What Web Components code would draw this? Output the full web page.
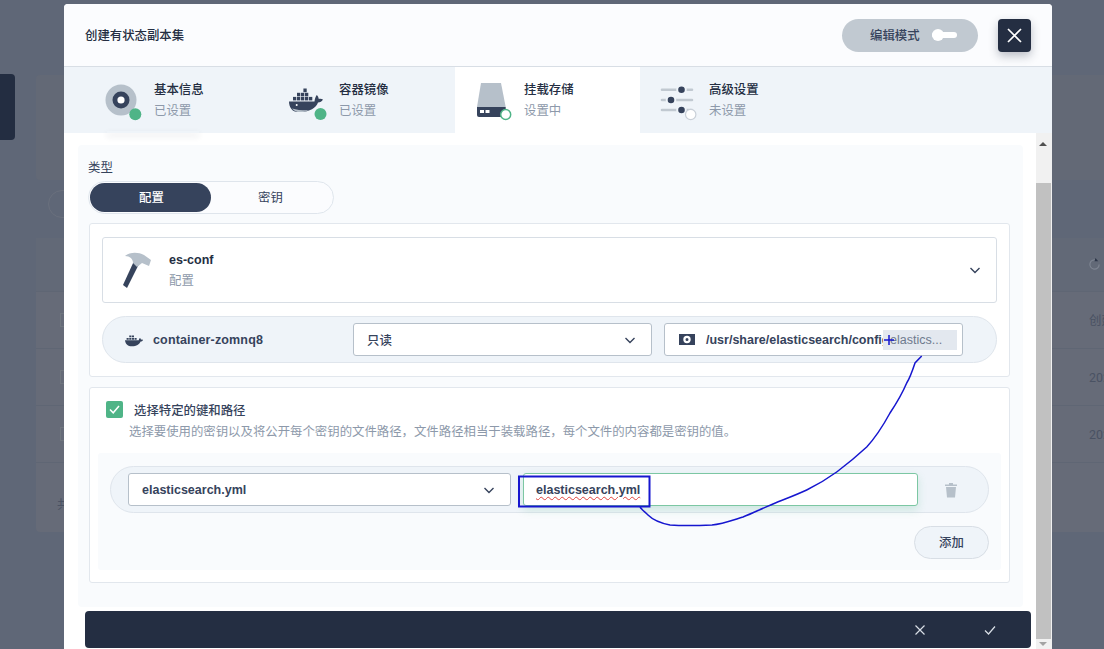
<!DOCTYPE html>
<html lang="zh">
<head>
<meta charset="utf-8">
<title>创建有状态副本集</title>
<style>
  html, body { margin: 0; height: 649px; overflow: hidden; background: #5f6777; }
  body { font: 12.4px Roboto, "Noto Sans CJK SC", sans-serif; color: #242e42; position: relative; }
</style>
</head>
<body>

<app-backdrop></app-backdrop>

<create-modal>
  <span slot="title">创建有状态副本集</span>

  <step-tab slot="tabs" heading="基本信息" sub="已设置" halo>
    <svg slot="icon" width="40" height="40" viewBox="0 0 40 40" overflow="visible">
      <circle cx="21" cy="20" r="15.5" fill="#b6c0ca"/>
      <circle cx="21" cy="20" r="8.5" fill="#36435c"/>
      <circle cx="21" cy="20" r="3.6" fill="#fff"/>
      <circle cx="35.3" cy="34.3" r="6" fill="#4fb487"/>
    </svg>
  </step-tab>
  <step-tab slot="tabs" heading="容器镜像" sub="已设置">
    <svg slot="icon" width="40" height="40" viewBox="0 0 40 40" overflow="visible">
      <path fill="#36435c" d="M4 21.500H29.500c.2-2.500 1-4.800 2.200-6.500 1.200 1 1.900 2.500 2.100 4 1.200-.4 3-.3 4.200.6-1 2-3 3-5 3C31 28 25 32 15 32H13C7 32 4 27 4 21.500Z"/>
      <path fill="#b6c0ca" d="M7 28.500c2 2.500 5 3.800 9 3.600 3 0 5.500-.6 7.500-1.800C18 30.500 12 30 7 28.500Z"/>
      <circle cx="11.700" cy="25" r="1" fill="#fff"/>
      <g fill="#36435c">
        <rect x="8" y="16.900" width="3.300" height="3.500"/><rect x="12" y="16.900" width="3.300" height="3.500"/><rect x="16" y="16.900" width="3.300" height="3.500"/><rect x="20" y="16.900" width="3.300" height="3.500"/><rect x="24" y="16.900" width="3.300" height="3.500"/>
        <rect x="12" y="12.800" width="3.300" height="3.500"/><rect x="16" y="12.800" width="3.300" height="3.500"/><rect x="20" y="12.800" width="3.300" height="3.500"/>
        <rect x="18.400" y="8.500" width="3.300" height="3.700"/>
      </g>
      <circle cx="35.500" cy="34" r="6" fill="#4fb487"/>
    </svg>
  </step-tab>
  <step-tab slot="tabs" heading="挂载存储" sub="设置中" active>
    <svg slot="icon" width="40" height="40" viewBox="0 0 40 40" overflow="visible">
      <path fill="#b6c0ca" d="M11 3H31L35.700 27H7Z"/>
      <path fill="#36435c" d="M7 27H35.700V35a2 2 0 0 1-2 2H9a2 2 0 0 1-2-2Z"/>
      <rect x="10" y="30" width="4" height="3" fill="#fff"/><rect x="15.500" y="30" width="4" height="3" fill="#fff"/>
      <circle cx="35.700" cy="34.500" r="5" fill="#fff" stroke="#4fb487" stroke-width="1.500"/>
    </svg>
  </step-tab>
  <step-tab slot="tabs" heading="高级设置" sub="未设置">
    <svg slot="icon" width="40" height="40" viewBox="0 0 40 40" overflow="visible">
      <g stroke="#c1c9d1" stroke-width="2.600" stroke-linecap="round">
        <path d="M7 9.700H37M7 20H37M7 30H37"/>
      </g>
      <g fill="#36435c" stroke="#eff4f9" stroke-width="2">
        <circle cx="26.500" cy="9.700" r="4.300"/><circle cx="16" cy="20" r="4.300"/><circle cx="26.500" cy="30" r="4.300"/>
      </g>
      <circle cx="35.700" cy="34.500" r="5.200" fill="#fff" stroke="#c9d0d8" stroke-width="1.200"/>
    </svg>
  </step-tab>

  <form-panel>
    <type-toggle></type-toggle>

    <form-card first>
      <volume-head name="es-conf" kind="配置"></volume-head>
      <pill-row>
        <div class="container" slot="lead" style="display:flex;align-items:center;gap:10px;width:216px;padding-left:22px;font-weight:700;font-family:'Liberation Sans',sans-serif;font-size:12.5px;color:#36435c;letter-spacing:.15px">
          <svg width="18" height="14" viewBox="0 0 34 24"><path fill="#36435c" d="M0 12.500H26c.4-2 1.400-3.600 2.400-4.200 1 .8 1.600 1.900 1.900 3.100 1.200-.3 2.700-.2 3.700.5-1 2-2.600 2.900-4.500 2.900C27 20 22 24 13 24 5.500 24 1 20 0 12.500ZM3 8h4v3.500H3ZM8 8h4v3.500H8ZM13 8h4v3.500H13ZM18 8h4v3.500H18ZM8 3.500h4V7H8ZM13 3.500h4V7H13Z"/></svg>
          <span>container-zomnq8</span>
        </div>
        <select-box style="width:299px">只读</select-box>
        <mount-path></mount-path>
      </pill-row>
    </form-card>

    <form-card>
      <key-picker></key-picker>
    </form-card>
  </form-panel>

  <footer-bar slot="footer"></footer-bar>
</create-modal>

<sketch-marks></sketch-marks>

<script>
const backdropTpl = document.createElement("template");
backdropTpl.innerHTML = `
  <style>
    :host { display: flex; height: 649px; overflow: hidden; color: #4a5263; }
    #side { flex: none; width: 15px; height: 66px; margin: 74px 21px 0 0; background: #232d41; border-radius: 0 4px 4px 0; }
    #main { flex: none; width: 1100px; }
    #banner { height: 105px; margin-top: 75px; background: #636976; border-radius: 4px; }
    #search { width: 60px; height: 28px; margin: 10px 0 20px 12px; border: 1px solid #6a707d; border-radius: 14px; box-sizing: border-box; }
    #table { height: 294px; background: #666b78; border-radius: 4px; }
    #head { height: 54px; display: flex; align-items: center; justify-content: flex-end; padding-right: 35px; background: #626977; border-bottom: 1px solid #5f6674; box-sizing: border-box; }
    .row { height: 57px; display: flex; align-items: center; padding-left: 24px; border-bottom: 1px solid #5f6674; box-sizing: border-box; }
    .box { flex: none; width: 12px; height: 14px; border: 1px solid #70767f; box-sizing: border-box; }
    .time { margin-left: 1017px; white-space: nowrap; }
    #count { padding: 32px 0 0 21px; }
  </style>
  <div id="side"></div>
  <div id="main">
    <div id="banner"></div>
    <div id="search"></div>
    <div id="table">
      <div id="head">
        <svg width="13" height="13" viewBox="0 0 14 14" fill="none"><path d="M12 7a5 5 0 1 1-3-4.600" stroke="#7d8491" stroke-width="1.300"/><path d="M8 0l3 3.500H7Z" fill="#2d3648"/></svg>
      </div>
      <div class="row"><span class="box"></span><span class="time">创建时间</span></div>
      <div class="row"><span class="box"></span><span class="time">2020-06-12</span></div>
      <div class="row"><span class="box"></span><span class="time">2020-06-12</span></div>
      <div id="count">共 2 项</div>
    </div>
  </div>
`;
class AppBackdrop extends HTMLElement {
  connectedCallback() {
    this.attachShadow({ mode: "open" }).appendChild(backdropTpl.content.cloneNode(true));
  }
}
customElements.define("app-backdrop", AppBackdrop);

const modalTpl = document.createElement("template");
modalTpl.innerHTML = `
  <style>
    :host { display: flex; flex-direction: column; position: absolute; left: 64px; top: 4px; width: 988px; height: 660px; background: #fff; border-radius: 4px; overflow: hidden; }
    header { flex: none; height: 62px; display: flex; align-items: center; padding: 0 21px; background: #fbfcfe; border-bottom: 1px solid #d8dee5; font-weight: 500; }
    #title { flex: 1; }
    #mode { width: 136px; height: 33px; box-sizing: border-box; padding-left: 28px; display: flex; align-items: center; gap: 12px; border-radius: 17px; background: #c1c9d1; color: #36435c; }
    #knob { position: relative; width: 25px; height: 6px; background: #fff; border-radius: 3px; }
    #knob::before { content: ""; position: absolute; left: 0; top: -3px; width: 12px; height: 12px; border-radius: 50%; background: #fff; }
    #close { flex: none; width: 33px; height: 33px; margin-left: 20px; display: flex; align-items: center; justify-content: center; background: #242e42; border-radius: 4px; box-shadow: 0 4px 10px rgba(36,46,66,.3); }
    nav { flex: none; height: 66px; display: flex; padding-left: 21px; background: #eff4f9; position: relative; z-index: 1; }
    #body { flex: 1; display: flex; min-height: 0; }
    #scroll { flex: 1; min-width: 0; padding-top: 12px; }
    #foot { margin: 4px 5px 0 21px; }
    #bar { flex: none; width: 16px; box-sizing: border-box; background: #f1f1f1; position: relative; }
    #thumb { margin: 50px 1px 0 0; height: 456px; background: #c1c1c1; }
    #up, #down { position: absolute; left: 3px; width: 0; height: 0; border: 4px solid transparent; }
    #up { top: 5px; border-bottom: 4px solid #505050; }
    #down { top: 509px; border-top: 4px solid #a3a3a3; }
  </style>
  <header>
    <div id="title"><slot name="title"></slot></div>
    <div id="mode"><span>编辑模式</span><span id="knob"></span></div>
    <div id="close"><svg width="15" height="15" viewBox="0 0 15 15"><path d="M1 1L14 14M14 1L1 14" stroke="#fff" stroke-width="1.700"/></svg></div>
  </header>
  <nav><slot name="tabs"></slot></nav>
  <div id="body">
    <div id="scroll">
      <slot></slot>
      <div id="foot"><slot name="footer"></slot></div>
    </div>
    <div id="bar"><span id="up"></span><div id="thumb"></div><span id="down"></span></div>
  </div>
`;
class CreateModal extends HTMLElement {
  connectedCallback() {
    this.attachShadow({ mode: "open" }).appendChild(modalTpl.content.cloneNode(true));
  }
}
customElements.define("create-modal", CreateModal);

const tabTpl = document.createElement("template");
tabTpl.innerHTML = `
  <style>
    :host { display: flex; align-items: center; width: 185px; height: 66px; box-sizing: border-box; padding-left: 15px; position: relative; }
    :host([active]) { background: #fff; }
    :host([halo])::after { content: ""; position: absolute; left: 22px; top: 64px; width: 92px; height: 2px; box-shadow: 0 3px 6px rgba(36,46,66,.16); }
    #icon { flex: none; width: 40px; height: 40px; margin-right: 14px; }
    #h { font-weight: 500; line-height: 20px; }
    #s { color: #8d99aa; line-height: 20px; margin-top: 1px; }
  </style>
  <div id="icon"><slot name="icon"></slot></div>
  <div><div id="h"></div><div id="s"></div></div>
`;
class StepTab extends HTMLElement {
  connectedCallback() {
    this.root = this.attachShadow({ mode: "open" });
    this.root.appendChild(tabTpl.content.cloneNode(true));
    this.root.getElementById("h").textContent = this.getAttribute("heading");
    this.root.getElementById("s").textContent = this.getAttribute("sub");
  }
}
customElements.define("step-tab", StepTab);

const panelTpl = document.createElement("template");
panelTpl.innerHTML = `
  <style>
    :host { display: block; margin: 0 13px 0 14px; padding: 0 13px 24px 11px; background: #f9fbfd; border-radius: 4px; height: 462px; box-sizing: border-box; }
  </style>
  <slot></slot>
`;
class FormPanel extends HTMLElement {
  connectedCallback() {
    this.attachShadow({ mode: "open" }).appendChild(panelTpl.content.cloneNode(true));
  }
}
customElements.define("form-panel", FormPanel);

const toggleTpl = document.createElement("template");
toggleTpl.innerHTML = `
  <style>
    :host { display: block; color: #36435c; }
    #label { margin: 0 0 6px -1px; padding-top: 15px; line-height: 15px; }
    #pill { width: 246px; height: 33px; box-sizing: border-box; margin-left: -1px; padding: 1px; display: flex; border: 1px solid #dfe5ec; border-radius: 17px; background: #fbfcfe; }
    #pill div { width: 119px; line-height: 29px; text-align: center; border-radius: 15px; }
    #pill .on { width: 119px; padding-left: 2px; color: #fff; background: #36435c; font-weight: 500; }
  </style>
  <div id="label">类型</div>
  <div id="pill"><div class="on">配置</div><div>密钥</div></div>
`;
class TypeToggle extends HTMLElement {
  connectedCallback() {
    this.attachShadow({ mode: "open" }).appendChild(toggleTpl.content.cloneNode(true));
  }
}
customElements.define("type-toggle", TypeToggle);

const cardTpl = document.createElement("template");
cardTpl.innerHTML = `
  <style>
    :host { display: flex; flex-direction: column; gap: 13px; margin-top: 10px; padding: 13px 12px; background: #fff; border: 1px solid #e2e7ed; border-radius: 3px; box-sizing: border-box; }
    :host([first]) { margin-top: 9px; height: 154px; }
  </style>
  <slot></slot>
`;
class FormCard extends HTMLElement {
  connectedCallback() {
    this.attachShadow({ mode: "open" }).appendChild(cardTpl.content.cloneNode(true));
  }
}
customElements.define("form-card", FormCard);

const headTpl = document.createElement("template");
headTpl.innerHTML = `
  <style>
    :host { display: flex; align-items: center; height: 67px; box-sizing: border-box; padding: 0 15px 0 17px; border: 1px solid #d8dee5; border-radius: 3px; background: #fff; }
    svg.ham { flex: none; margin-right: 17px; }
    #txt { flex: 1; }
    #name { font-family: "Liberation Sans", sans-serif; font-weight: 700; font-size: 12.5px; line-height: 20px; margin-top: 1px; }
    #kind { color: #8d99aa; line-height: 20px; margin-top: 1px; }
  </style>
  <svg class="ham" width="32" height="40" viewBox="0 0 32 40">
    <path fill="#36435c" d="M3 35L7 38L19 14L14 11Z"/>
    <path fill="#b6c0ca" d="M5 6C10 2 18 2 24 5L31 10L29 16L22 13L17 17L13 13C13 9 10 6 5 6Z"/>
  </svg>
  <div id="txt"><div id="name"></div><div id="kind"></div></div>
  <svg width="12" height="12" viewBox="0 0 12 12" fill="none"><path d="M1.500 4L6 8.500L10.500 4" stroke="#36435c" stroke-width="1.400"/></svg>
`;
class VolumeHead extends HTMLElement {
  connectedCallback() {
    this.root = this.attachShadow({ mode: "open" });
    this.root.appendChild(headTpl.content.cloneNode(true));
    this.root.getElementById("name").textContent = this.getAttribute("name");
    this.root.getElementById("kind").textContent = this.getAttribute("kind");
  }
}
customElements.define("volume-head", VolumeHead);

const rowTpl = document.createElement("template");
rowTpl.innerHTML = `
  <style>
    :host { display: flex; align-items: center; gap: 12px; min-height: 47px; box-sizing: border-box; background: #eff4f9; border: 1px solid #dfe5ec; border-radius: 24px; }
  </style>
  <slot name="lead"></slot>
  <slot></slot>
`;
class PillRow extends HTMLElement {
  connectedCallback() {
    this.attachShadow({ mode: "open" }).appendChild(rowTpl.content.cloneNode(true));
  }
}
customElements.define("pill-row", PillRow);

const selectTpl = document.createElement("template");
selectTpl.innerHTML = `
  <style>
    :host { display: flex; align-items: center; flex: none; height: 33px; box-sizing: border-box; padding: 0 15px 0 13px; background: #fff; border: 1px solid #b6c0ca; border-radius: 3px; font-weight: 500; color: #36435c; }
    :host([mono]) { font-family: "Liberation Sans", sans-serif; font-weight: 700; font-size: 12.5px; }
    span { flex: 1; }
  </style>
  <span><slot></slot></span>
  <svg width="12" height="12" viewBox="0 0 12 12" fill="none"><path d="M1.500 4L6 8.500L10.500 4" stroke="#36435c" stroke-width="1.400"/></svg>
`;
class SelectBox extends HTMLElement {
  connectedCallback() {
    this.attachShadow({ mode: "open" }).appendChild(selectTpl.content.cloneNode(true));
  }
}
customElements.define("select-box", SelectBox);

const mountTpl = document.createElement("template");
mountTpl.innerHTML = `
  <style>
    :host { display: flex; align-items: center; position: relative; flex: none; width: 299px; height: 33px; box-sizing: border-box; padding-left: 14px; background: #fff; border: 1px solid #b6c0ca; border-radius: 3px; overflow: hidden; color: #36435c; font: 700 12.5px "Liberation Sans", sans-serif; white-space: nowrap; }
    svg { flex: none; margin-right: 11px; }
    #tag { position: absolute; right: 5px; top: 6px; width: 74px; height: 20px; box-sizing: border-box; padding-left: 7px; line-height: 21px; background: #e3e8ef; color: #6f7b8e; font-weight: 400; }
  </style>
  <svg width="16" height="13" viewBox="0 0 16 13"><path fill-rule="evenodd" fill="#36435c" d="M0 1H16V12H0ZM8 2.800a3.700 3.700 0 1 0 0 7.400a3.700 3.700 0 1 0 0-7.400ZM8 5a1.500 1.500 0 1 1 0 3a1.500 1.500 0 1 1 0-3Z"/></svg>
  <span>/usr/share/elasticsearch/config</span>
  <div id="tag">elastics...</div>
`;
class MountPath extends HTMLElement {
  connectedCallback() {
    this.attachShadow({ mode: "open" }).appendChild(mountTpl.content.cloneNode(true));
  }
}
customElements.define("mount-path", MountPath);

const pickerTpl = document.createElement("template");
pickerTpl.innerHTML = `
  <style>
    :host { display: block; color: #36435c; height: 168px; }
    #check { display: flex; align-items: center; gap: 11px; margin: 0 0 0 4px; height: 17px; font-weight: 500; }
    #box { flex: none; width: 17px; height: 17px; display: flex; align-items: center; justify-content: center; background: #4fb487; border-radius: 2px; }
    #desc { margin: 6px 0 13px 27px; color: #8d99aa; line-height: 16px; }
    #sub { margin: 0 -4px; padding: 13px 12px 11px; background: #f9fbfd; border-radius: 3px; }
    .trash { flex: none; width: 71px; display: flex; justify-content: center; padding-right: 5px; box-sizing: border-box; }
    #input { flex: none; width: 395px; height: 33px; box-sizing: border-box; padding-left: 12px; display: flex; align-items: center; background: #fff; border: 1px solid #7cc7a3; border-radius: 3px; box-shadow: 0 4px 8px rgba(85,188,138,.22); font: 700 12.5px "Liberation Sans", sans-serif; text-decoration: underline wavy #e0423c 1px; text-underline-offset: 2px; }
    #add { display: block; width: 75px; height: 33px; margin: 13px 0 0 auto; box-sizing: border-box; line-height: 31px; text-align: center; background: #eff4f9; border: 1px solid #d8dee5; border-radius: 17px; font-weight: 500; }
  </style>
  <div id="check">
    <span id="box"><svg width="11" height="11" viewBox="0 0 11 11" fill="none"><path d="M1 5.500L4.200 8.800L10 2" stroke="#fff" stroke-width="1.500"/></svg></span>
    <span>选择特定的键和路径</span>
  </div>
  <div id="desc">选择要使用的密钥以及将公开每个密钥的文件路径，文件路径相当于装载路径，每个文件的内容都是密钥的值。</div>
  <div id="sub">
    <pill-row style="padding-left:17px">
      <select-box mono style="width:383px">elasticsearch.yml</select-box>
      <div id="input"><span>elasticsearch.yml</span></div>
      <div class="trash" style="margin-left:-12px">
        <svg width="14" height="16" viewBox="0 0 14 16"><path fill="#b6c0ca" d="M1 2.500H5V1H9V2.500H13V4H1ZM2 5H12L11 15.500H3Z"/></svg>
      </div>
    </pill-row>
    <div id="add">添加</div>
  </div>
`;
class KeyPicker extends HTMLElement {
  connectedCallback() {
    this.attachShadow({ mode: "open" }).appendChild(pickerTpl.content.cloneNode(true));
  }
}
customElements.define("key-picker", KeyPicker);

const footerTpl = document.createElement("template");
footerTpl.innerHTML = `
  <style>
    :host { display: flex; align-items: center; justify-content: flex-end; gap: 58px; height: 37px; padding-right: 35px; background: #242e42; border-radius: 4px; }
  </style>
  <svg width="12" height="12" viewBox="0 0 12 12"><path d="M1.500 1.500L10.500 10.500M10.500 1.500L1.500 10.500" stroke="#d8dee5" stroke-width="1.200"/></svg>
  <svg width="12" height="12" viewBox="0 0 12 12" fill="none"><path d="M1 6.500L4.500 10L11 2.500" stroke="#d8dee5" stroke-width="1.200"/></svg>
`;
class FooterBar extends HTMLElement {
  connectedCallback() {
    this.attachShadow({ mode: "open" }).appendChild(footerTpl.content.cloneNode(true));
  }
}
customElements.define("footer-bar", FooterBar);

// hand drawn marks on top of the screenshot
const marksTpl = document.createElement("template");
marksTpl.innerHTML = `
  <style>
    :host { display: block; position: absolute; left: 0; top: 0; width: 1104px; height: 649px; pointer-events: none; }
  </style>
  <svg width="1104" height="649" fill="none" stroke="#1616cf" stroke-width="1.500">
    <path d="M921.700 356L915 363C912 372 910 378 906.700 383C902 394 896 404 890 413C884 424 875 438 866.700 447C857 456 846 465 836.700 472C827 479 817 485 806.700 490C796 495 785 499 773 504C763 508 753 513 743 517C733 520 722 524 712 525C700 525.500 685 526 670 525C660 523 652 519 648 515C645 512 642 510 640 507"/>
    <rect x="519" y="476.500" width="130.500" height="30" stroke-width="2"/>
    <path d="M884 340H894M889 335V345" stroke-width="1.500"/>
  </svg>
`;
class SketchMarks extends HTMLElement {
  connectedCallback() {
    this.attachShadow({ mode: "open" }).appendChild(marksTpl.content.cloneNode(true));
  }
}
customElements.define("sketch-marks", SketchMarks);
</script>
</body>
</html>
